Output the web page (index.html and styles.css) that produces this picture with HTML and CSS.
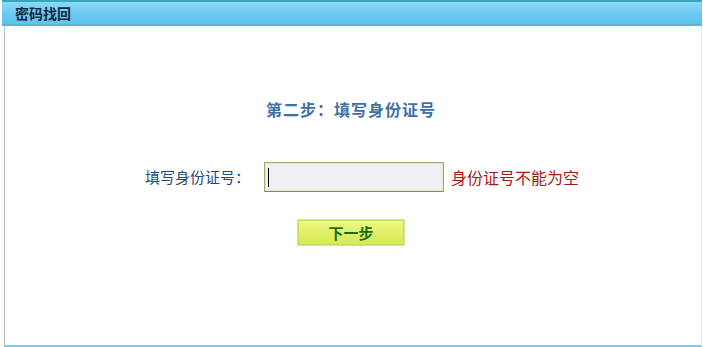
FILE: index.html
```html
<!DOCTYPE html>
<html lang="zh">
<head>
<meta charset="utf-8">
<title>密码找回</title>
<link rel="stylesheet" href="styles.css">
</head>
<body>
<div class="page">
  <div class="header"><span class="header-title">密码找回</span></div>
  <div class="panel">
    <h2 class="step-title">第二步：填写身份证号</h2>
    <div class="form-row">
      <label class="label" for="idcard">填写身份证号：</label>
      <div class="input-box"><span class="caret"></span><input id="idcard" class="input" type="text"></div>
      <span class="error">身份证号不能为空</span>
    </div>
    <div class="btn-row">
      <button class="btn" type="button">下一步</button>
    </div>
  </div>
</div>
</body>
</html>
```

FILE: styles.css
```css
* { box-sizing: border-box; }
html, body { margin: 0; padding: 0; background: #ffffff; }
body {
  width: 703px;
  height: 347px;
  overflow: hidden;
  font-family: "Noto Sans CJK SC", "Liberation Sans", sans-serif;
}
.page {
  display: flex;
  flex-direction: column;
  height: 347px;
  padding: 0 1px 0 2px;
}
.header {
  height: 26px;
  display: flex;
  align-items: center;
  padding-left: 13px;
  border-top: 2px solid #3aa6b8;
  border-bottom: 2px solid #55bcd0;
  background: linear-gradient(#8ad8f6, #6ccaf2 50%, #60c2ee);
}
.header-title {
  font-size: 14px;
  font-weight: bold;
  color: #14283a;
  line-height: 1;
}
.panel {
  flex: 1;
  margin-left: 2px;
  border-left: 1px solid #b4bcbc;
  border-right: 1px solid #d6eef4;
  border-bottom: 2px solid #80c8e8;
  display: flex;
  flex-direction: column;
  align-items: center;
}
.step-title {
  margin: 72px 4px 0 0;
  font-size: 16px;
  font-weight: bold;
  color: #3f6fa6;
  line-height: 22px;
  letter-spacing: 1px;
}
.form-row {
  margin-top: 42px;
  display: flex;
  align-items: center;
  padding-left: 18px;
}
.label {
  font-size: 15px;
  color: #1f4d7a;
  line-height: 20px;
  margin-right: 14px;
}
.input-box {
  position: relative;
  width: 180px;
  height: 30px;
  border: 1px solid #a8a86a;
  border-bottom-color: #8a8a5a;
  background: #f0f0f4;
  box-shadow: inset 0 0 0 1px #e4e8c0;
}
.input {
  width: 100%;
  height: 100%;
  border: 0;
  background: transparent;
  outline: none;
  padding: 0 4px;
}
.caret {
  position: absolute;
  left: 3px;
  top: 5px;
  width: 1px;
  height: 19px;
  background: #000;
}
.error {
  margin-left: 7px;
  font-size: 16px;
  color: #a81818;
  line-height: 20px;
}
.btn-row {
  margin-top: 27px;
  margin-right: 4px;
  display: flex;
  justify-content: center;
}
.btn {
  width: 108px;
  height: 27px;
  border: 1px solid #d8e6a0;
  background: linear-gradient(#f0fa88, #e0f066 50%, #d6ea58);
  box-shadow: inset 0 0 0 1px #c4dc50;
  font-family: "Noto Sans CJK SC", sans-serif;
  font-size: 15px;
  font-weight: bold;
  color: #167010;
  padding: 0;
  line-height: 25px;
}
```
